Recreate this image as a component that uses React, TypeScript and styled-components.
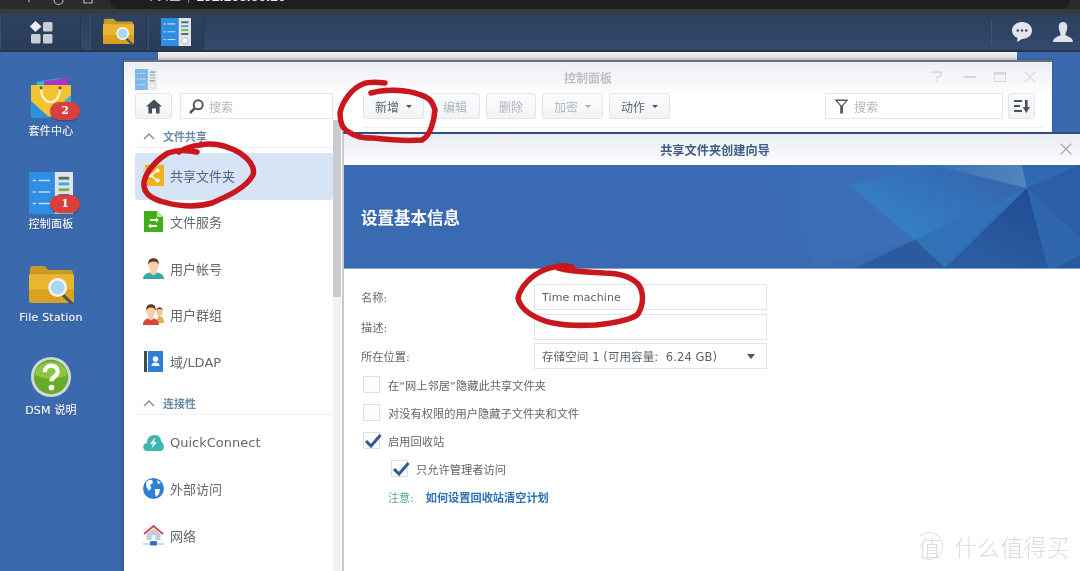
import React from "react";
import styled, { createGlobalStyle } from "styled-components";

const cjk = `"DejaVu Sans", "Noto Sans CJK SC", sans-serif`;

const Global = createGlobalStyle`
  html, body { margin: 0; padding: 0; background: #3b69ad; overflow: hidden; }
  * { box-sizing: border-box; }
`;

const Screen = styled.div`
  width: 1080px;
  height: 571px;
  display: flex;
  flex-direction: column;
  position: relative;
  overflow: hidden;
  font-family: ${cjk};
  filter: blur(0.35px);
`;

/* ---------- browser chrome ---------- */
const Chrome = styled.div`
  height: 14px;
  flex: none;
  background: linear-gradient(#2a2b2d 0 9px, #3a3a3a 9px);
  display: flex;
  overflow: hidden;
  padding-right: 10px;
`;
const ChromeGlyphs = styled.svg`
  flex: none;
`;
const Pill = styled.div`
  flex: 1;
  height: 9px;
  background: #1d1e20;
  border-radius: 0 0 9px 9px;
  overflow: hidden;
  color: #e8e8e8;
  font-family: "Liberation Sans", "Noto Sans CJK SC", sans-serif;
  line-height: 14px;
  white-space: nowrap;
  padding-left: 35px;
  display: flex;
  gap: 6px;
`;
const PillText = styled.span<{ $dim?: boolean; $bold?: boolean }>`
  margin-top: -11px;
  font-size: ${(p) => (p.$bold ? 14 : 12)}px;
  color: ${(p) => (p.$dim ? "#8a8a8a" : "#eeeeee")};
  font-weight: ${(p) => (p.$bold ? 700 : 400)};
`;

/* ---------- taskbar ---------- */
const Taskbar = styled.div`
  height: 38px;
  flex: none;
  background: linear-gradient(#2b405d, #34496c);
  border-bottom: 2px solid #26344a;
  display: flex;
  align-items: stretch;
`;
const TaskButton = styled.div<{ $w: number; $gap?: number }>`
  width: ${(p) => p.$w}px;
  margin-left: ${(p) => p.$gap ?? 0}px;
  display: flex;
  align-items: center;
  justify-content: center;
  border-right: 1px solid #25364e;
  border-left: 1px solid #3a4f70;
  background: linear-gradient(#2d4260, #2a3d59);
`;
const TaskRight = styled.div`
  margin-left: auto;
  display: flex;
  align-items: center;
  gap: 19px;
  padding-right: 6px;
`;
const TaskDivider = styled.div`
  width: 1px;
  height: 26px;
  background: #3f5474;
`;

/* ---------- desktop ---------- */
const Desktop = styled.div`
  flex: 1;
  position: relative;
  background: #3b69ad;
`;
const IconColumn = styled.div`
  width: 102px;
  padding-top: 25px;
  display: flex;
  flex-direction: column;
`;
const DeskItem = styled.div`
  height: 93px;
  display: flex;
  flex-direction: column;
  align-items: center;
`;
const DeskIcon = styled.div<{ $pt?: number }>`
  width: 46px;
  height: 44px;
  padding-top: ${(p) => p.$pt ?? 0}px;
  position: relative;
  display: flex;
  justify-content: center;
  align-items: flex-start;
`;
const DeskLabel = styled.div`
  margin-top: 3.5px;
  font-size: 11px;
  line-height: 14px;
  letter-spacing: 0.2px;
  color: #f2f5f9;
  text-shadow: 0 0 1px rgba(255, 255, 255, 0.5), 0 1px 1px rgba(0, 0, 0, 0.3);
  white-space: nowrap;
`;
const Badge = styled.div`
  position: absolute;
  left: 22px;
  top: 25px;
  width: 30px;
  height: 18px;
  border-radius: 9px;
  background: #d8403f;
  box-shadow: 0 1px 1px rgba(0, 0, 0, 0.3);
  color: #fff;
  font: 700 11px/18px "DejaVu Serif", "Liberation Serif", serif;
  text-align: center;
`;

/* ---------- back window strip ---------- */
const BackWindow = styled.div`
  position: absolute;
  left: 158px;
  top: 0;
  width: 859px;
  height: 10px;
  background: linear-gradient(#f4f4f4, #cfd0d2);
`;

/* ---------- control panel window ---------- */
const Window = styled.div`
  position: absolute;
  left: 124px;
  top: 8px;
  width: 928px;
  height: 520px;
  background: #fff;
  border-top: 2px solid #6a7078;
  display: flex;
  flex-direction: column;
  box-shadow: -1px 0 3px rgba(20, 40, 80, 0.4);
`;
const TitleBar = styled.div`
  height: 30px;
  flex: none;
  position: relative;
  display: flex;
  align-items: center;
  justify-content: center;
  background: linear-gradient(#eceef2, #fdfdfe);
`;
const TitleIcon = styled.div`
  position: absolute;
  left: 11px;
  top: 7px;
  opacity: 0.6;
  display: flex;
`;
const TitleText = styled.div`
  font-size: 12px;
  font-weight: 700;
  color: #bcc0c6;
`;
const WinControls = styled.div`
  position: absolute;
  right: 16px;
  top: 9px;
  display: flex;
  align-items: center;
  gap: 18px;
`;
const HelpSlot = styled.div`
  display: flex;
  margin-right: 4px;
`;
const WinBody = styled.div`
  flex: 1;
  display: flex;
  min-height: 0;
`;
const LeftCol = styled.div`
  width: 217px;
  flex: none;
  display: flex;
  flex-direction: column;
`;
const LeftTop = styled.div`
  display: flex;
  gap: 8px;
  padding: 1px 0 0 11px;
  height: 28px;
  flex: none;
`;
const ToolButton = styled.div<{ $w: number; $disabled?: boolean }>`
  width: ${(p) => p.$w}px;
  height: 26px;
  flex: none;
  display: flex;
  align-items: center;
  justify-content: center;
  gap: 5px;
  border: 1px solid #e1e6eb;
  border-radius: 3px;
  background: linear-gradient(#fafbfc, #f1f4f7);
  font-size: 12px;
  color: ${(p) => (p.$disabled ? "#b3b7bc" : "#5d6670")};
`;
const SearchBox = styled.div<{ $w: number }>`
  width: ${(p) => p.$w}px;
  height: 26px;
  flex: none;
  border: 1px solid #e2e5e9;
  background: #fff;
  display: flex;
  align-items: center;
  gap: 5px;
  padding-left: 8px;
  font-size: 12px;
  color: #b4b8bd;
`;
const Caret = styled.span<{ $disabled?: boolean }>`
  width: 0;
  height: 0;
  border-left: 3px solid transparent;
  border-right: 3px solid transparent;
  border-top: 3px solid ${(p) => (p.$disabled ? "#a8adb2" : "#4c5259")};
  margin-left: 2px;
`;
const SideWrap = styled.div`
  flex: 1;
  display: flex;
  min-height: 0;
  padding-left: 11px;
  overflow: hidden;
`;
const SideNav = styled.div`
  width: 198px;
  flex: none;
`;
const ScrollTrack = styled.div`
  width: 8px;
  flex: none;
  background: #f1f2f3;
`;
const ScrollThumb = styled.div`
  height: 177px;
  background: #c9cbce;
`;
const SectionHead = styled.div<{ $second?: boolean }>`
  height: 28px;
  margin-bottom: 5px;
  margin-top: ${(p) => (p.$second ? 1.5 : 0)}px;
  border-bottom: 1px solid #eef0f2;
  display: flex;
  align-items: center;
  gap: 8px;
  padding: 5px 0 0 8px;
  font-size: 11px;
  font-weight: 700;
  color: #6a8aa8;
`;
const NavRow = styled.div<{ $active?: boolean }>`
  height: 46.5px;
  display: flex;
  align-items: center;
  gap: 6px;
  padding: 0 0 2.5px 8px;
  border-radius: 3px;
  font-size: 13px;
  color: ${(p) => (p.$active ? "#4d6484" : "#62686f")};
  background: ${(p) => (p.$active ? "#d6e4f5" : "transparent")};
`;
const NavIcon = styled.div`
  width: 21px;
  height: 22px;
  flex: none;
  display: flex;
  align-items: center;
  justify-content: center;
`;
const RightCol = styled.div`
  flex: 1;
  min-width: 0;
`;
const ToolBar = styled.div`
  margin: 1px 9px 0 22px;
  height: 35px;
  display: flex;
  gap: 6px;
  border-bottom: 1px solid #edeff2;
`;
const ToolSpacer = styled.div`
  flex: 1;
`;
const ToolRightGroup = styled.div`
  display: flex;
  gap: 5px;
  padding-right: 8px;
`;

/* ---------- wizard ---------- */
const Wizard = styled.div`
  position: absolute;
  left: 342px;
  top: 80px;
  right: 0;
  bottom: 0;
  background: #fff;
  border-top: 2px solid #2f4f7e;
  border-left: 2px solid #c9cacc;
  display: flex;
  flex-direction: column;
`;
const WizardHead = styled.div`
  height: 31px;
  flex: none;
  position: relative;
  display: flex;
  align-items: center;
  justify-content: center;
  padding-left: 6px;
  background: linear-gradient(#e9ecf3, #fdfdfe);
  font-size: 12.2px;
  font-weight: 700;
  color: #3f5d85;
`;
const CloseSpot = styled.div`
  position: absolute;
  right: 8px;
  top: 9px;
  display: flex;
`;
const Banner = styled.div`
  height: 104px;
  flex: none;
  position: relative;
  background: #3a6ab1;
  border-bottom: 1px solid #7fa3d0;
  display: flex;
  align-items: center;
  padding-left: 17px;
  color: #fff;
  font-size: 16.5px;
  font-weight: 700;
`;
const BannerArt = styled.svg`
  position: absolute;
  left: 0;
  top: 0;
`;
const BannerTitle = styled.div`
  position: relative;
  margin-top: 1px;
`;
const Form = styled.div`
  padding: 15px 0 0 17px;
  display: flex;
  flex-direction: column;
  color: #5f666d;
  font-size: 11.25px;
`;
const FormRow = styled.div<{ $mb?: number }>`
  display: grid;
  grid-template-columns: 173px 233px;
  align-items: center;
  margin-bottom: ${(p) => p.$mb ?? 3.5}px;
`;
const Field = styled.div<{ $select?: boolean }>`
  height: 26px;
  border: 1px solid #e2e5e8;
  background: #fff;
  display: flex;
  align-items: center;
  justify-content: space-between;
  padding: 0 11px 0 7px;
  font-size: ${(p) => (p.$select ? 11.5 : 11)}px;
  letter-spacing: 0.1px;
  color: #5a626a;
  white-space: nowrap;
`;
const SelectCaret = styled.span`
  width: 0;
  height: 0;
  border-left: 4.5px solid transparent;
  border-right: 4.5px solid transparent;
  border-top: 5px solid #4c5359;
`;
const CheckRow = styled.div<{ $nested?: boolean }>`
  height: 28px;
  display: flex;
  align-items: center;
  gap: 8px;
  padding: 0 0 1px ${(p) => (p.$nested ? 30 : 2)}px;
`;
const CheckBox = styled.div`
  width: 17px;
  height: 17px;
  flex: none;
  border: 1px solid #dcdfe3;
  background: #fdfdfd;
  position: relative;
`;
const CheckMark = styled.svg`
  position: absolute;
  left: 0;
  top: 0;
  overflow: visible;
`;
const NoteRow = styled.div`
  height: 28px;
  display: flex;
  align-items: center;
  gap: 12px;
  padding-left: 27px;
`;
const NoteLabel = styled.span`
  color: #55a88d;
  font-size: 11px;
`;
const NoteLink = styled.span`
  color: #2b72b8;
  font-weight: 700;
  font-size: 11.2px;
`;

/* ---------- overlays ---------- */
const Ink = styled.svg`
  position: absolute;
  left: 0;
  top: 0;
  pointer-events: none;
`;
const Watermark = styled.div`
  position: absolute;
  right: 10px;
  bottom: 9px;
  display: flex;
  align-items: center;
  gap: 11px;
  color: #dcdcdc;
  font-size: 22.5px;
  letter-spacing: 0.6px;
  font-family: "Noto Sans CJK SC", sans-serif;
  font-weight: 300;
`;
const WatermarkRing = styled.div`
  width: 28px;
  height: 28px;
  border-radius: 50%;
  border: 1px solid #e2e2e2;
  border-left-color: transparent;
  display: flex;
  align-items: center;
  justify-content: center;
  font-size: 22px;
  letter-spacing: 0;
`;

/* ---------- icons ---------- */
const AppsIcon = () => (
  <svg width="24" height="24" viewBox="0 0 24 24">
    <path d="M6.5 1 L12.5 6.5 L6.5 12 L.8 6.5Z" fill="#eceef1" />
    <rect x="14" y="2" width="9.5" height="9.5" rx="1.5" fill="#c9ced6" />
    <rect x="2" y="14" width="9.5" height="9.5" rx="1.5" fill="#c9ced6" />
    <rect x="14" y="14" width="9.5" height="9.5" rx="1.5" fill="#c9ced6" />
  </svg>
);
const FolderIcon = ({ w }: { w: number }) => (
  <svg width={w} height={(w * 40) / 44} viewBox="0 0 44 40">
    <path d="M1 4 Q1 1 4 1H15L19 5H40Q43 5 43 8V14H1Z" fill="#c99a28" />
    <path d="M0 9H44V34Q44 37 41 37H3Q0 37 0 34Z" fill="#eab52f" />
    <path d="M0 24H44V34Q44 37 41 37H3Q0 37 0 34Z" fill="#d9a021" />
    <line x1="32" y1="28" x2="42" y2="38" stroke="#4a5560" strokeWidth="3" />
    <circle cx="28" cy="22" r="8" fill="#a8d8f4" stroke="#f6f6f6" strokeWidth="2.4" />
  </svg>
);
const PanelIcon = ({ w }: { w: number }) => (
  <svg width={w} height={(w * 44) / 46} viewBox="0 0 46 44">
    <rect x="0" y="0" width="27" height="44" fill="#2f8de4" />
    <rect x="27" y="0" width="19" height="44" fill="#dfe4e8" />
    <path d="M4 9h3M10 9h12M4 21h3M10 21h12M4 33h3M10 33h12" stroke="#bfe0fa" strokeWidth="1.6" />
    <rect x="31" y="5" width="11" height="3" fill="#5b6670" />
    <rect x="31" y="11" width="11" height="3" fill="#39a9dc" />
    <rect x="31" y="17" width="11" height="3" fill="#7ab648" />
    <rect x="31" y="23" width="11" height="3" fill="#5b6670" />
    <circle cx="36.5" cy="35" r="5" fill="#f3f5f6" stroke="#9ea8ae" />
  </svg>
);
const BagIcon = () => (
  <svg width="42" height="42" viewBox="0 0 42 42">
    <path d="M6 5 L30 1 L35 8 L8 10Z" fill="#34b7d8" />
    <path d="M14 4 L38 1 L38 8 L14 9Z" fill="#a736c9" />
    <path d="M1 8H41V38L1 41Z" fill="#f3c331" />
    <path d="M1 24 L20 41 H1Z" fill="#2f90dc" />
    <path d="M28 30 L41 18 V40 H28Z" fill="#49a9c9" />
    <path d="M11 11 C11 30 30 30 30 11" fill="none" stroke="#fff5d0" strokeWidth="2.2" />
    <circle cx="11" cy="11" r="1.4" fill="#5a4a20" />
    <circle cx="30" cy="11" r="1.4" fill="#5a4a20" />
  </svg>
);
const HelpIcon = () => (
  <svg width="42" height="42" viewBox="0 0 44 44">
    <circle cx="22" cy="22" r="21" fill="#cfd8d6" />
    <circle cx="22" cy="22" r="18" fill="#6aaa2a" />
    <path d="M5 20 A17 14 0 0 1 39 20 Q22 28 5 20Z" fill="#8cc63f" />
    <path d="M15.5 17 C15.5 8 29 8 29 16.5 C29 21.5 22.5 21.5 22.5 26.5" fill="none" stroke="#fff" strokeWidth="4.4" />
    <circle cx="22.5" cy="33" r="3" fill="#fff" />
  </svg>
);
const ChatIcon = () => (
  <svg width="22" height="22" viewBox="0 0 22 22">
    <path d="M11 1 C5 1 1 4.8 1 9.5 C1 13 3.2 15.6 6.5 17 L6.2 21 L11 18 C17 18 21 14.2 21 9.5 C21 4.8 17 1 11 1Z" fill="#e3e7ec" />
    <circle cx="6.8" cy="9.5" r="1.3" fill="#3a4f6e" />
    <circle cx="11" cy="9.5" r="1.3" fill="#3a4f6e" />
    <circle cx="15.2" cy="9.5" r="1.3" fill="#3a4f6e" />
  </svg>
);
const UserIcon = () => (
  <svg width="22" height="22" viewBox="0 0 22 22">
    <path d="M11 1 C7.5 1 6.5 4 6.8 7 C7 10 8.6 12 8.6 13.5 C8.6 15.5 1 15.5 1 21H21C21 15.5 13.4 15.5 13.4 13.5 C13.4 12 15 10 15.2 7 C15.5 4 14.5 1 11 1Z" fill="#dfe3e8" />
  </svg>
);
const HomeIcon = () => (
  <svg width="16" height="15" viewBox="0 0 16 15">
    <path d="M8 .5 L16 7.5 H13.6 V14.5 H10 V9.5 H6 V14.5 H2.4 V7.5 H0Z" fill="#46505a" />
  </svg>
);
const SearchGlass = () => (
  <svg width="15" height="15" viewBox="0 0 15 15">
    <circle cx="9.2" cy="5.8" r="4.5" fill="none" stroke="#50575e" strokeWidth="2" />
    <line x1="5.8" y1="9.2" x2="1" y2="14" stroke="#50575e" strokeWidth="2.6" />
  </svg>
);
const FunnelIcon = () => (
  <svg width="15" height="15" viewBox="0 0 15 15">
    <path d="M.5 .5 H14.5 L9 7 V14.5 H6.2 V7Z M3.4 2 L7.4 6.4 H7.8 L11.8 2Z" fill="#50575e" fillRule="evenodd" />
  </svg>
);
const SortIcon = () => (
  <svg width="16" height="13" viewBox="0 0 16 13">
    <path d="M0 1h8M0 6h6M0 11h8" stroke="#4b5259" strokeWidth="1.8" />
    <path d="M11 0h2.6v7H16l-3.7 6L8.8 7H11Z" fill="#4b5259" />
  </svg>
);
const Chevron = () => (
  <svg width="12" height="7" viewBox="0 0 12 7">
    <path d="M1 6 L6 1 L11 6" fill="none" stroke="#7f8c98" strokeWidth="1.4" />
  </svg>
);
const HelpMark = () => (
  <svg width="11" height="12" viewBox="0 0 11 12">
    <path d="M1 2.5 Q1 1 3 1 H8 Q10 1 10 3 Q10 5 6 6 V8" fill="none" stroke="#d3d6da" strokeWidth="1.3" />
    <rect x="5.2" y="9.6" width="1.6" height="1.6" fill="#d3d6da" />
  </svg>
);
const MinMark = () => (
  <svg width="12" height="3" viewBox="0 0 12 3">
    <rect width="12" height="2" fill="#d3d6da" />
  </svg>
);
const MaxMark = () => (
  <svg width="12" height="10" viewBox="0 0 12 10">
    <rect x=".5" y=".5" width="11" height="9" fill="none" stroke="#d3d6da" />
    <rect x=".5" y=".5" width="11" height="2" fill="#d3d6da" />
  </svg>
);
const XMark = ({ s, c }: { s: number; c: string }) => (
  <svg width={s} height={s} viewBox="0 0 12 12">
    <path d="M.6 .6 L11.4 11.4 M11.4 .6 L.6 11.4" stroke={c} strokeWidth="1.1" />
  </svg>
);
const ShareIcon = () => (
  <svg width="21" height="21" viewBox="0 0 21 21">
    <path d="M2 0H21V21H2Z" fill="#f2b019" />
    <path d="M0 3H3V21H0Z" fill="#d9d4c0" />
    <path d="M14.5 5.5 L7.5 10.5 L14.5 15.5" fill="none" stroke="#fff" strokeWidth="1.5" />
    <circle cx="14.5" cy="5.5" r="2.1" fill="#fff" />
    <circle cx="7.5" cy="10.5" r="2.1" fill="#fff" />
    <circle cx="14.5" cy="15.5" r="2.1" fill="#fff" />
  </svg>
);
const FileSvcIcon = () => (
  <svg width="19" height="21" viewBox="0 0 19 21">
    <path d="M0 0H13L19 6V21H0Z" fill="#43ad1c" />
    <path d="M13 0L19 6H13Z" fill="#b8e39c" />
    <path d="M3 9H9V7.5L12 10L9 12.5V11H3Z" fill="#fff" transform="translate(3 -1)" />
    <path d="M16 14H10V12.5L7 15L10 17.5V16H16Z" fill="#fff" transform="translate(-3 0)" />
  </svg>
);
const PersonIcon = ({ shirt }: { shirt: string }) => (
  <svg width="21" height="21" viewBox="0 0 21 21">
    <path d="M0 21 Q0 15.5 7 14.5 H14 Q21 15.5 21 21Z" fill={shirt} />
    <path d="M7.5 11H13.5V15.5L10.5 17.5L7.5 15.5Z" fill="#f4cda6" />
    <ellipse cx="10.5" cy="7" rx="5" ry="6.2" fill="#f5cfa8" />
    <path d="M5.3 7 C4.6 1.5 8 .3 10.5 .3 C13 .3 16.4 1.5 15.7 7 C15 4.5 13.5 3.5 10.5 3.5 C7.5 3.5 6 4.5 5.3 7Z" fill="#5b3a21" />
  </svg>
);
const GroupIcon = () => (
  <svg width="21" height="21" viewBox="0 0 21 21">
    <path d="M14 17 Q14 12 17 12 Q21 13 21 19 H14Z" fill="#e0b040" />
    <ellipse cx="16.5" cy="7.5" rx="3.2" ry="4.4" fill="#f0c69c" />
    <path d="M13.4 6 C13.5 2.5 19.5 2.5 19.8 6 C18 4.8 15 4.8 13.4 6Z" fill="#5b3a21" />
    <path d="M0 21 Q0 15.5 5 14.5 H11 Q16 15.5 16 21Z" fill="#d8443c" />
    <path d="M5.5 11H10.5V15L8 16.5L5.5 15Z" fill="#f4cda6" />
    <ellipse cx="8" cy="7" rx="4.6" ry="6" fill="#f5cfa8" />
    <path d="M3.4 7 C2.6 1.5 5.6 .3 8 .3 C10.4 .3 13.4 1.5 12.6 7 C12 4.5 11 3.5 8 3.5 C5 3.5 4 4.5 3.4 7Z" fill="#5b3a21" />
  </svg>
);
const LdapIcon = () => (
  <svg width="19" height="21" viewBox="0 0 19 21">
    <rect width="3" height="21" fill="#3e4a56" />
    <rect x="4" width="15" height="21" fill="#2f7fd8" />
    <circle cx="11.5" cy="8" r="2.8" fill="#fff" />
    <path d="M7.5 15 Q7.5 11.5 11.5 11.5 Q15.5 11.5 15.5 15Z" fill="#fff" />
  </svg>
);
const CloudIcon = () => (
  <svg width="21" height="17" viewBox="0 0 21 17">
    <path d="M4 17 C-1 17 -1 9 4 9 C4 3 8 1 12 1 C16 1 18 4 18 7.5 C22 9 22 17 17 17Z" fill="#3cb8b2" />
    <path d="M12 3.5 L7 10 H10 L8.5 14.5 L14 8 H11Z" fill="#fff" />
  </svg>
);
const GlobeIcon = () => (
  <svg width="21" height="21" viewBox="0 0 21 21">
    <circle cx="10.5" cy="10.5" r="10.5" fill="#2f7fd4" />
    <path d="M3 4 Q7 1 9 2 L10 5 L7 7 L8.5 10 L6 13 L3.5 9Z M12 11 L17 11 L16 16 L13 19 L12 15Z M14 2 L18 5 L15 6Z" fill="#fff" />
  </svg>
);
const NetIcon = () => (
  <svg width="21" height="21" viewBox="0 0 21 21">
    <path d="M1 9 L10.5 1 L20 9" fill="none" stroke="#d5453f" strokeWidth="1.8" />
    <path d="M3.5 9 L10.5 3.2 L17.5 9 V15 H3.5Z" fill="#c5cbd6" />
    <rect x="8.5" y="10" width="4" height="5" fill="#f3f4f6" />
    <path d="M0 19 H21" stroke="#9fb4cc" strokeWidth="1" />
    <rect x="7" y="16" width="7" height="4.5" rx="1" fill="#2f75c4" />
  </svg>
);

const navA = [
  { label: "共享文件夹", icon: <ShareIcon />, active: true },
  { label: "文件服务", icon: <FileSvcIcon /> },
  { label: "用户帐号", icon: <PersonIcon shirt="#35a9a3" /> },
  { label: "用户群组", icon: <GroupIcon /> },
  { label: "域/LDAP", icon: <LdapIcon /> },
];
const navB = [
  { label: "QuickConnect", icon: <CloudIcon /> },
  { label: "外部访问", icon: <GlobeIcon /> },
  { label: "网络", icon: <NetIcon /> },
];

const Check = ({ checked }: { checked?: boolean }) => (
  <CheckBox>
    {checked && (
      <CheckMark width="17" height="17" viewBox="0 0 17 17">
        <path d="M2 8 L7 13 L16.5 2" fill="none" stroke="#2c5c92" strokeWidth="3" />
      </CheckMark>
    )}
  </CheckBox>
);

export default function App() {
  return (
    <Screen>
      <Global />
      <Chrome>
        <ChromeGlyphs width="110" height="9" viewBox="0 0 110 9" fill="none" stroke="#b8b8b8" strokeWidth="1.2">
          <path d="M29 0V2" />
          <path d="M54 0 A4.5 4.5 0 0 0 63 0" />
          <path d="M84 0V3H92V0" />
        </ChromeGlyphs>
        <Pill>
          <PillText>不安全</PillText>
          <PillText $dim>|</PillText>
          <PillText $bold>192.168.50.10</PillText>
          <PillText $dim>:5000</PillText>
        </Pill>
      </Chrome>
      <Taskbar>
        <TaskButton $w={81}><AppsIcon /></TaskButton>
        <TaskButton $w={57} $gap={9}><FolderIcon w={31} /></TaskButton>
        <TaskButton $w={56} $gap={1}><PanelIcon w={30} /></TaskButton>
        <TaskRight>
          <TaskDivider />
          <ChatIcon />
          <UserIcon />
        </TaskRight>
      </Taskbar>
      <Desktop>
        <IconColumn>
          <DeskItem>
            <DeskIcon><BagIcon /><Badge>2</Badge></DeskIcon>
            <DeskLabel>套件中心</DeskLabel>
          </DeskItem>
          <DeskItem>
            <DeskIcon $pt={2}><PanelIcon w={44} /><Badge>1</Badge></DeskIcon>
            <DeskLabel>控制面板</DeskLabel>
          </DeskItem>
          <DeskItem>
            <DeskIcon $pt={2}><FolderIcon w={45} /></DeskIcon>
            <DeskLabel>File Station</DeskLabel>
          </DeskItem>
          <DeskItem>
            <DeskIcon><HelpIcon /></DeskIcon>
            <DeskLabel>DSM 说明</DeskLabel>
          </DeskItem>
        </IconColumn>

        <BackWindow />

        <Window>
          <TitleBar>
            <TitleIcon><PanelIcon w={22} /></TitleIcon>
            <TitleText>控制面板</TitleText>
            <WinControls>
              <HelpSlot><HelpMark /></HelpSlot>
              <MinMark />
              <MaxMark />
              <XMark s={12} c="#d3d6da" />
            </WinControls>
          </TitleBar>
          <WinBody>
            <LeftCol>
              <LeftTop>
                <ToolButton $w={37}><HomeIcon /></ToolButton>
                <SearchBox $w={153}><SearchGlass />搜索</SearchBox>
              </LeftTop>
              <SideWrap>
                <SideNav>
                  <SectionHead><Chevron />文件共享</SectionHead>
                  {navA.map((n) => (
                    <NavRow key={n.label} $active={n.active}>
                      <NavIcon>{n.icon}</NavIcon>
                      {n.label}
                    </NavRow>
                  ))}
                  <SectionHead $second><Chevron />连接性</SectionHead>
                  {navB.map((n) => (
                    <NavRow key={n.label}>
                      <NavIcon>{n.icon}</NavIcon>
                      {n.label}
                    </NavRow>
                  ))}
                </SideNav>
                <ScrollTrack><ScrollThumb /></ScrollTrack>
              </SideWrap>
            </LeftCol>
            <RightCol>
              <ToolBar>
                <ToolButton $w={61}>新增<Caret /></ToolButton>
                <ToolButton $w={50} $disabled>编辑</ToolButton>
                <ToolButton $w={50} $disabled>删除</ToolButton>
                <ToolButton $w={61} $disabled>加密<Caret $disabled /></ToolButton>
                <ToolButton $w={61}>动作<Caret /></ToolButton>
                <ToolSpacer />
                <ToolRightGroup>
                  <SearchBox $w={178}><FunnelIcon />搜索</SearchBox>
                  <ToolButton $w={27}><SortIcon /></ToolButton>
                </ToolRightGroup>
              </ToolBar>
            </RightCol>
          </WinBody>
        </Window>

        <Wizard>
          <WizardHead>
            共享文件夹创建向导
            <CloseSpot><XMark s={12} c="#9aa0a6" /></CloseSpot>
          </WizardHead>
          <Banner>
            <BannerArt width="736" height="103" viewBox="0 0 736 103">
              <defs>
                <linearGradient id="fade" gradientUnits="userSpaceOnUse" x1="423" y1="0" x2="600" y2="0">
                  <stop offset="0" stopColor="#3a6bb2" />
                  <stop offset="1" stopColor="#3a72b9" />
                </linearGradient>
                <linearGradient id="glow" gradientUnits="userSpaceOnUse" x1="610" y1="0" x2="570" y2="75">
                  <stop offset="0" stopColor="#3469b0" />
                  <stop offset="1" stopColor="#3580c9" />
                </linearGradient>
                <linearGradient id="sheen" gradientUnits="userSpaceOnUse" x1="589" y1="0" x2="683" y2="23">
                  <stop offset="0" stopColor="#3a70b5" />
                  <stop offset="1" stopColor="#5486be" />
                </linearGradient>
                <linearGradient id="deep" gradientUnits="userSpaceOnUse" x1="683" y1="23" x2="650" y2="103">
                  <stop offset="0" stopColor="#204c93" />
                  <stop offset="1" stopColor="#2b5da3" />
                </linearGradient>
              </defs>
              <polygon points="423,0 589,0 683,23 571,75 471,103" fill="url(#fade)" />
              <polygon points="589,0 683,23 571,75 505,20" fill="url(#glow)" />
              <polygon points="589,0 678,0 683,23" fill="url(#sheen)" />
              <polygon points="678,0 736,0 683,23" fill="#2f69b2" />
              <polygon points="683,23 571,75 601,103" fill="#3270b8" />
              <polygon points="571,75 511,103 601,103" fill="#2b5a9f" />
              <polygon points="683,23 601,103 704,103" fill="url(#deep)" />
              <polygon points="683,23 736,73 736,90 711,103 704,103" fill="#3066ae" />
              <polygon points="736,90 711,103 736,103" fill="#295a9f" />
              <polygon points="683,23 736,0 736,73" fill="#2b5ea5" />
            </BannerArt>
            <BannerTitle>设置基本信息</BannerTitle>
          </Banner>
          <Form>
            <FormRow><span>名称:</span><Field>Time machine</Field></FormRow>
            <FormRow><span>描述:</span><Field /></FormRow>
            <FormRow $mb={2}>
              <span>所在位置:</span>
              <Field $select>存储空间 1 (可用容量:&nbsp; 6.24 GB)<SelectCaret /></Field>
            </FormRow>
            <CheckRow><Check /><span>在“网上邻居”隐藏此共享文件夹</span></CheckRow>
            <CheckRow><Check /><span>对没有权限的用户隐藏子文件夹和文件</span></CheckRow>
            <CheckRow><Check checked /><span>启用回收站</span></CheckRow>
            <CheckRow $nested><Check checked /><span>只允许管理者访问</span></CheckRow>
            <NoteRow><NoteLabel>注意:</NoteLabel><NoteLink>如何设置回收站清空计划</NoteLink></NoteRow>
          </Form>
          <Watermark>
            <WatermarkRing>值</WatermarkRing>
            什么值得买
          </Watermark>
        </Wizard>
      </Desktop>

      <Ink width="1080" height="571" viewBox="0 0 1080 571" fill="none" stroke="#c9171e" strokeWidth="5.5" strokeLinecap="round" strokeLinejoin="round">
        <path d="M385 83 C376 82 368 82 363 84 C352 88 342 102 340 113 C340 122 342 128 347 131 C356 137 362 138 373 138 C390 140 408 141 422 140 C430 136 434 122 435 110 C432 100 428 97 421 95 C406 89 384 89 371 93" />
        <path d="M197 152 C188 150 176 150 168 153 C156 160 146 172 144 182 C143 192 150 198 160 201 C175 206 195 208 212 203 C228 196 246 188 253 175 C255 168 250 160 240 153 C228 146 214 142 200 145 C190 146 184 149 179 152" />
        <path d="M572 267 C564 264 552 267 544 270 C530 276 520 288 518 298 C520 308 528 314 540 319 C556 326 576 326 596 325 C614 323 632 320 638 314 C644 304 644 292 638 284 C630 276 618 273 604 273 C590 272 572 272 558 268" />
      </Ink>
    </Screen>
  );
}
